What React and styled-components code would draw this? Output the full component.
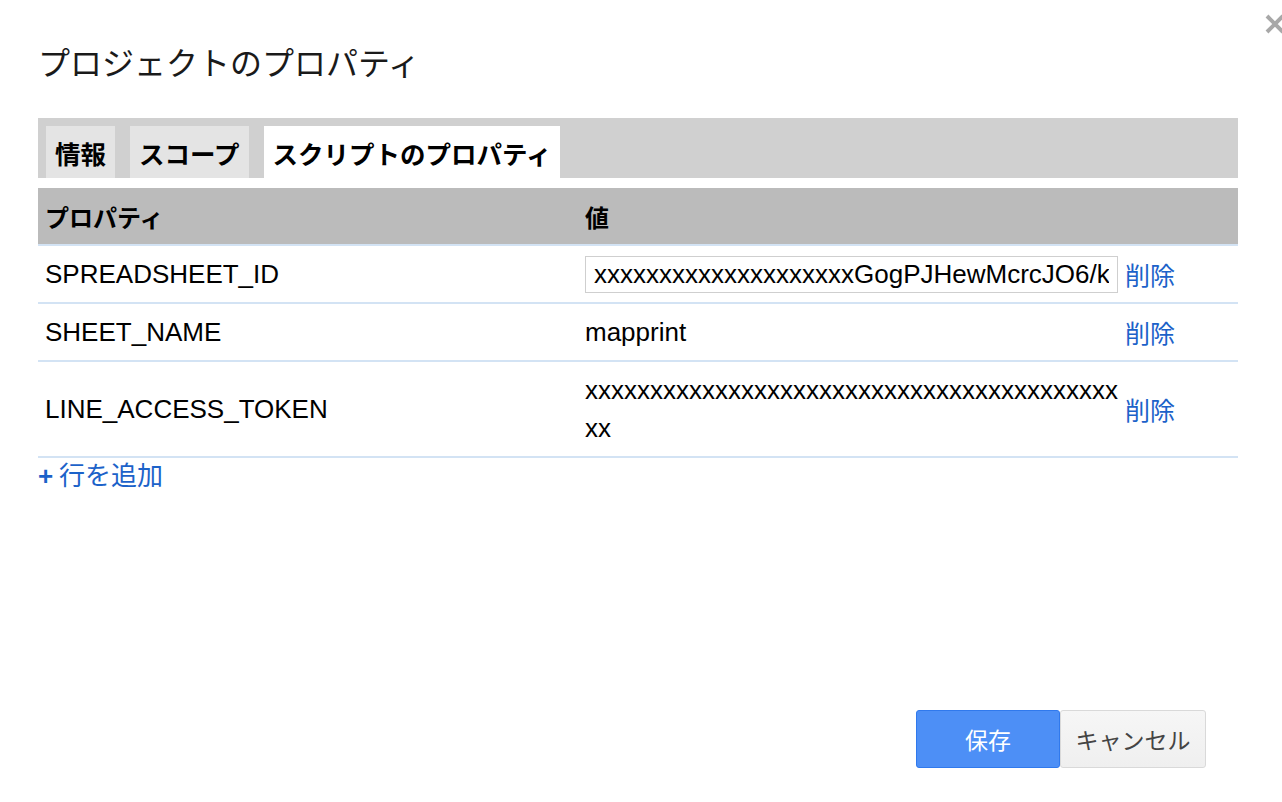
import React from "react"
import styled, { createGlobalStyle } from "styled-components"

const GlobalStyle = createGlobalStyle`
  html, body {
    margin: 0;
    padding: 0;
    background: #fff;
    overflow: hidden;
  }
  body {
    font-family: "Liberation Sans", Arial, "Noto Sans CJK JP", sans-serif;
    color: #000;
  }
`

const rows = [
  { key: "SPREADSHEET_ID", value: "xxxxxxxxxxxxxxxxxxxxGogPJHewMcrcJO6/kQ3tZ8bVnR2", editing: true },
  { key: "SHEET_NAME", value: "mapprint" },
  { key: "LINE_ACCESS_TOKEN", value: "xxxxxxxxxxxxxxxxxxxxxxxxxxxxxxxxxxxxxxxxxxx" },
]

const App = () => (
  <>
    <GlobalStyle />
    <Dialog>
      <CloseButton aria-label="close">
        <svg width="22" height="22" viewBox="0 0 22 22">
          <path d="M3 3 L19 19 M19 3 L3 19" stroke="#a8a8a8" strokeWidth="4" strokeLinecap="butt" />
        </svg>
      </CloseButton>
      <Title>プロジェクトのプロパティ</Title>
      <TabBar>
        <Tab>情報</Tab>
        <Tab>スコープ</Tab>
        <Tab active>スクリプトのプロパティ</Tab>
      </TabBar>
      <Table>
        <HeadRow>
          <HeadCell>プロパティ</HeadCell>
          <HeadCell>値</HeadCell>
          <HeadCell />
        </HeadRow>
        {rows.map(row => (
          <Row key={row.key}>
            <Cell>{row.key}</Cell>
            <ValueCell>
              {row.editing ? <ValueInput defaultValue={row.value} /> : row.value}
            </ValueCell>
            <ActionCell>
              <Link href="#">削除</Link>
            </ActionCell>
          </Row>
        ))}
      </Table>
      <AddLink href="#">
        <Plus>+</Plus>&nbsp;行を追加
      </AddLink>
      <Footer>
        <Button primary>保存</Button>
        <Button>キャンセル</Button>
      </Footer>
    </Dialog>
  </>
)

const Dialog = styled.div`
  position: relative;
  box-sizing: border-box;
  height: 802px;
  display: flex;
  flex-direction: column;
  padding: 40px 44px 34px 38px;
`

const CloseButton = styled.div`
  position: absolute;
  top: 13px;
  left: 1264px;
  width: 22px;
  height: 22px;
`

const Title = styled.h1`
  margin: 0;
  font-family: "Noto Sans CJK JP", sans-serif;
  font-weight: 400;
  font-size: 32px;
  line-height: 42px;
  color: #1a1a1a;
`

const TabBar = styled.div`
  margin-top: 36px;
  height: 60px;
  box-sizing: border-box;
  background: #d0d0d0;
  display: flex;
  align-items: flex-end;
  gap: 15px;
  padding: 0 8px;
`

const Tab = styled.div`
  height: 52px;
  display: flex;
  align-items: center;
  padding: 0 9px;
  font-family: "Noto Sans CJK JP", sans-serif;
  font-weight: 700;
  font-size: 25.5px;
  background: ${p => (p.active ? "#ffffff" : "#e4e4e4")};
  color: #000;
`

const Table = styled.div`
  margin-top: 10px;
  display: grid;
  grid-template-columns: 540px 542px 1fr;
`

const HeadRow = styled.div`
  display: contents;
`

const HeadCell = styled.div`
  height: 56px;
  background: #bbbbbb;
  border-bottom: 2px solid #d3e3f4;
  display: flex;
  align-items: center;
  padding: 0 7px;
  font-family: "Noto Sans CJK JP", sans-serif;
  font-weight: 700;
  font-size: 24px;
`

const Row = styled.div`
  display: contents;
`

const Cell = styled.div`
  display: flex;
  align-items: center;
  padding: 9px 7px;
  line-height: 38px;
  font-size: 26px;
  border-bottom: 2px solid #d3e3f4;
`

const ValueCell = styled(Cell)`
  word-break: break-all;
  padding-right: 0;
`

const ActionCell = styled(Cell)`
  padding-left: 5px;
`

const ValueInput = styled.input`
  box-sizing: border-box;
  width: 533px;
  height: 37px;
  padding: 0 8px;
  border: 1px solid #cfcfcf;
  font-family: "Liberation Sans", Arial, sans-serif;
  font-size: 26px;
  color: #000;
  outline: none;
`

const Link = styled.a`
  color: #1c62c9;
  text-decoration: none;
  font-family: "Noto Sans CJK JP", sans-serif;
  font-size: 25px;
`

const AddLink = styled.a`
  align-self: flex-start;
  line-height: 32px;
  color: #1c62c9;
  text-decoration: none;
  font-family: "Noto Sans CJK JP", sans-serif;
  font-size: 26px;
`

const Plus = styled.span`
  font-family: "Liberation Sans", Arial, sans-serif;
  font-weight: 700;
`

const Footer = styled.div`
  margin-top: auto;
  display: flex;
  justify-content: flex-end;
  padding-right: 32px;
`

const Button = styled.button`
  height: 58px;
  width: ${p => (p.primary ? "144px" : "146px")};
  border-radius: 3px;
  border: 1px solid ${p => (p.primary ? "#3079ed" : "#d9d9d9")};
  background: ${p => (p.primary ? "#4d8ff6" : "linear-gradient(#f6f6f6, #efefef)")};
  color: ${p => (p.primary ? "#fff" : "#444")};
  font-family: "Noto Sans CJK JP", sans-serif;
  font-size: 23px;
  padding: 0;
  cursor: pointer;
`

export default App
